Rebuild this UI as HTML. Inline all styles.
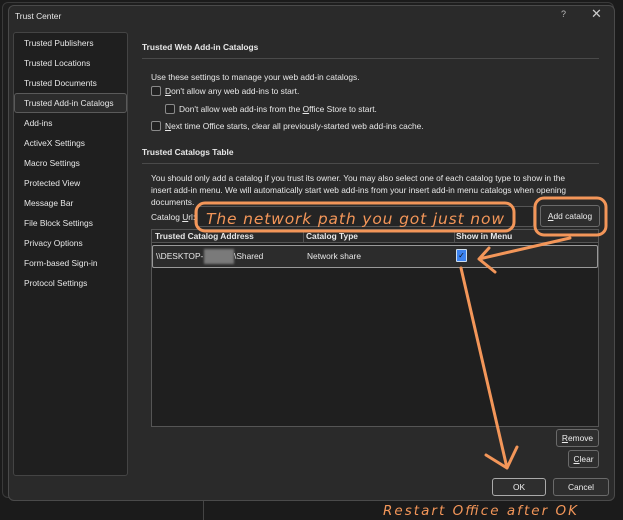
<!DOCTYPE html>
<html><head><meta charset="utf-8"><style>
*{margin:0;padding:0;box-sizing:border-box}
body{width:623px;height:520px;background:#1b1b1b;position:relative;overflow:hidden;font-family:"Liberation Sans",sans-serif;font-size:8.4px;color:#e8e8e8}
.a{position:absolute;white-space:nowrap}
.b{font-weight:bold}
.cb{position:absolute;width:10px;height:10px;border:1px solid #8a8a8a;border-radius:2px;background:#222}
.btn{position:absolute;border:1px solid #6a6a6a;border-radius:3px;background:#2e2e2e;text-align:center;color:#eee}
.side div{height:20px;line-height:20px;padding-left:10px}
u{text-decoration:underline}
</style></head><body>
<div class="a" style="left:2px;top:2px;width:612px;height:496px;border:1px solid #3a3a3a;border-radius:6px;background:#1e1e1e"></div>
<div class="a" style="left:8px;top:5px;width:607px;height:496px;border:1px solid #4a4a4a;border-radius:6px;background:#2a2a2a"></div>
<div class="a" style="left:203px;top:501px;width:1px;height:19px;background:#444"></div>
<div class="a" style="left:15px;top:11px">Trust Center</div>
<div class="a" style="left:561px;top:9px;font-size:9px;color:#bbb">?</div>
<div class="a" style="left:591px;top:6px;font-size:13px;color:#ccc">✕</div>
<div class="a side" style="left:13px;top:32px;width:115px;height:444px;border:1px solid #444;border-radius:3px;background:#1f1f1f;padding-top:0px">
<div>Trusted Publishers</div><div>Trusted Locations</div><div>Trusted Documents</div>
<div style="border:1px solid #5a5a5a;border-radius:3px;background:#2c2c2c;margin:0 0;padding-left:9px;line-height:18px">Trusted Add-in Catalogs</div>
<div>Add-ins</div><div>ActiveX Settings</div><div>Macro Settings</div><div>Protected View</div><div>Message Bar</div><div>File Block Settings</div><div>Privacy Options</div><div>Form-based Sign-in</div><div>Protocol Settings</div>
</div>
<div class="a b" style="left:142px;top:42px">Trusted Web Add-in Catalogs</div>
<div class="a" style="left:142px;top:58px;width:457px;height:1px;background:#4a4a4a"></div>
<div class="a" style="left:151px;top:72px">Use these settings to manage your web add-in catalogs.</div>
<div class="cb" style="left:151px;top:86px"></div><div class="a" style="left:165px;top:86px"><u>D</u>on't allow any web add-ins to start.</div>
<div class="cb" style="left:165px;top:104px"></div><div class="a" style="left:179px;top:104px">Don't allow web add-ins from the <u>O</u>ffice Store to start.</div>
<div class="cb" style="left:151px;top:121px"></div><div class="a" style="left:165px;top:121px"><u>N</u>ext time Office starts, clear all previously-started web add-ins cache.</div>
<div class="a b" style="left:142px;top:147px">Trusted Catalogs Table</div>
<div class="a" style="left:142px;top:163px;width:457px;height:1px;background:#4a4a4a"></div>
<div class="a" style="left:151px;top:172px;line-height:12px">You should only add a catalog if you trust its owner. You may also select one of each catalog type to show in the<br>insert add-in menu. We will automatically start web add-ins from your insert add-in menu catalogs when opening<br>documents.</div>
<div class="a" style="left:151px;top:212px">Catalog <u>U</u>rl:</div>
<div class="a" style="left:197px;top:206px;width:337px;height:21px;border:1px solid #555;border-radius:2px;background:#242424"></div>
<div class="btn" style="left:540px;top:205px;width:60px;height:22px;line-height:20px"><u>A</u>dd catalog</div>
<div class="a" style="left:151px;top:229px;width:448px;height:198px;border:1px solid #555;background:#1f1f1f"></div>
<div class="a b" style="left:152px;top:230px;width:446px;height:13px;background:#2b2b2b;border-bottom:1px solid #555"></div>
<div class="a" style="left:303px;top:230px;width:1px;height:13px;background:#555"></div>
<div class="a" style="left:454px;top:230px;width:1px;height:13px;background:#555"></div>
<div class="a b" style="left:155px;top:231px">Trusted Catalog Address</div>
<div class="a b" style="left:306px;top:231px">Catalog Type</div>
<div class="a b" style="left:456px;top:231px">Show in Menu</div>
<div class="a" style="left:152px;top:245px;width:446px;height:23px;border:1px solid #9a9a9a;border-radius:2px;background:#2c2c2c"></div>
<div class="a" style="left:156px;top:251px">\\DESKTOP-</div>
<div class="a" style="left:204px;top:249px;width:30px;height:15px;background:#7a7a7a;filter:blur(1px)"></div>
<div class="a" style="left:234px;top:251px">\Shared</div>
<div class="a" style="left:307px;top:251px">Network share</div>
<div class="a" style="left:456px;top:249px;width:11px;height:13px;background:#3b82f0;border:1px solid #cde;border-radius:1px;font-size:8px;line-height:11px;text-align:center;color:#111">✓</div>
<div class="btn" style="left:556px;top:429px;width:43px;height:18px;line-height:16px"><u>R</u>emove</div>
<div class="btn" style="left:568px;top:450px;width:31px;height:18px;line-height:16px"><u>C</u>lear</div>
<div class="btn" style="left:492px;top:478px;width:54px;height:18px;line-height:16px;border-color:#aaa">OK</div>
<div class="btn" style="left:553px;top:478px;width:56px;height:18px;line-height:16px">Cancel</div>
<svg class="a" style="left:0;top:0" width="623" height="520">
<g fill="none" stroke="#f39659" stroke-width="3" stroke-linecap="round" stroke-linejoin="round">
<rect x="196" y="203" width="318" height="28" rx="9"/>
<rect x="535" y="198" width="71" height="37" rx="9"/>
<path d="M570 238 L479 259 M479 259 L489 248 M479 259 L495 272"/>
<path d="M461 268 L507 468 M507 468 L486 455 M507 468 L517 447"/>
</g>
<text x="206" y="224" fill="#f39659" font-family="DejaVu Sans" font-style="italic" font-size="15.5" textLength="298">The network path you got just now</text>
<text x="383" y="515" fill="#f39659" font-family="DejaVu Sans" font-style="italic" font-size="13.5" textLength="194">Restart Office after OK</text>
</svg>
</body></html>
